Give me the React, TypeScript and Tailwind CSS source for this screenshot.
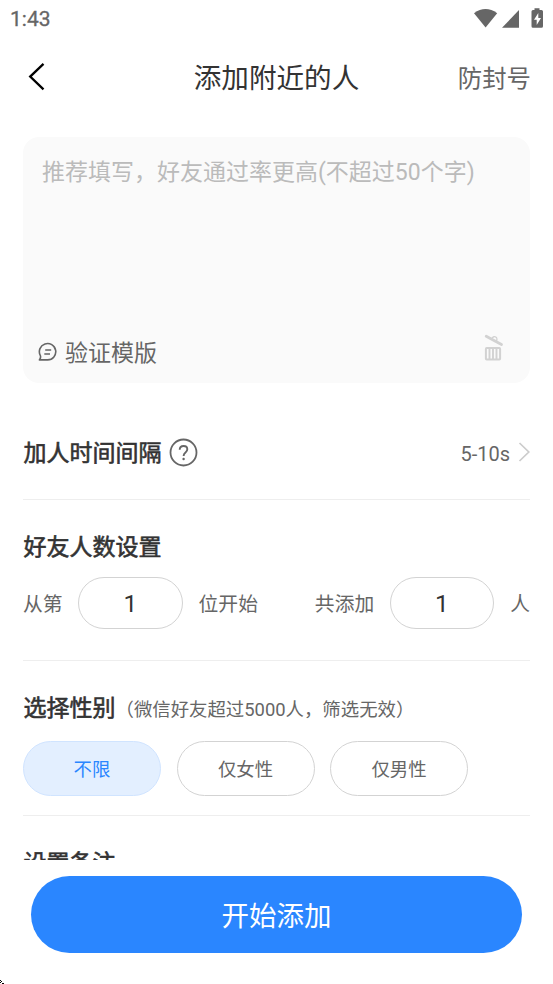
import React from "react";

const cjk = "font-[Roboto,'Noto_Sans_CJK_SC',sans-serif]";
const heading = "pl-[0.5px] text-[23px] leading-[34px] text-[#333] [-webkit-text-stroke:0.6px_#333]";

function StatusBar() {
  return (
    <div className="flex h-[38px] items-center justify-between pl-[10px] pr-[10px] text-[#666]">
      <span className="text-[21px] leading-[38px] [-webkit-text-stroke:0.3px_#666]">1:43</span>
      <svg width="70" height="38" viewBox="473 0 70 38" fill="#666">
        <path d="M474 13.2 Q485.500 4.800 497.200 13.200 L485.600 27.400 Z" />
        <path d="M502 27.800 L519 10 V27.800 Z" />
        <path
          fillRule="evenodd"
          d="M534.500 8.200 H539.500 V10 H541.500 Q543 10 543 11.500 V26.300 Q543 27.800 541.500 27.800 H533 Q531.500 27.800 531.500 26.300 V11.500 Q531.500 10 533 10 H534.500 Z M538.300 13 L534 19.800 H536.700 V25 L541 18 H538.300 Z"
        />
      </svg>
    </div>
  );
}

function TopBar() {
  return (
    <header className="grid h-[99px] grid-cols-[1fr_auto_1fr] items-start pl-[28px] pr-[22px] pt-[21px]">
      <svg className="mt-[3px]" width="18" height="30" viewBox="0 0 18 30" fill="none" stroke="#000" strokeWidth="2.300">
        <path d="M15.500 1.900 L2.200 14.600 L15.500 27.300" />
      </svg>
      <h1 className="-ml-[6px] text-[27.6px] leading-[40px] text-[#333]">添加附近的人</h1>
      <span className="justify-self-end text-[24.4px] leading-[40px] text-[#666]">防封号</span>
    </header>
  );
}

function MessageCard() {
  return (
    <section className="flex h-[246px] shrink-0 flex-col justify-between rounded-[16px] bg-[#fafafa] pb-[12px] pl-[19px] pr-[26px] pt-[19px]">
      <p className="whitespace-nowrap text-[23px] leading-[34px] text-[#bbb]">推荐填写，好友通过率更高(不超过50个字)</p>
      <div className="-ml-[4px] flex items-center">
        <svg className="-mt-[3px]" width="20" height="20" viewBox="0 0 20 20" fill="none" stroke="#666" strokeWidth="1.600">
          <path d="M1.400 17.900 H9.700 A8.200 8.200 0 1 0 2.300 13.500 Q3.200 15.500 1.400 17.900 Z" strokeLinejoin="round" />
          <path d="M7.200 8 H13.200 M6.300 12 H12" />
        </svg>
        <span className="ml-[7px] pt-[1px] text-[23px] leading-[35px] text-[#666]">验证模版</span>
        <svg className="-mt-[11px] ml-auto" width="20" height="28" viewBox="0 0 20 28" fill="none" stroke="#d2d2d2">
          <path d="M2.200 2.300 L17.500 10.500" strokeWidth="2.800" strokeLinecap="round" />
          <path d="M7.800 4.500 Q9.500 1.500 12.500 3.500 Q13.500 5 12.500 7" strokeWidth="1.300" />
          <rect x="1.900" y="14.100" width="14.200" height="11.500" rx="0.800" strokeWidth="2" />
          <path d="M5.500 14 V25 M9 14 V25 M12.500 14 V25" strokeWidth="1.900" />
        </svg>
      </div>
    </section>
  );
}

function NumberInput() {
  return (
    <div className="flex h-[52px] w-[104.500px] items-center justify-center rounded-full border border-[#d3d3d3] pt-[3px] text-[24.500px] text-[#333]">
      1
    </div>
  );
}

function GenderOption({ label, active = false }: { label: string; active?: boolean }) {
  return (
    <button
      className={`flex h-[55px] w-[138px] items-center justify-center rounded-full border pt-[2px] text-[18.4px] ${
        active ? "border-[#d0e4ff] bg-[#e3efff] text-[#2a86ff]" : "border-[#d3d3d3] bg-white text-[#666]"
      }`}
    >
      {label}
    </button>
  );
}

export default function App() {
  return (
    <div lang="zh-CN" className={`relative flex h-[984px] w-[553px] flex-col overflow-hidden bg-white ${cjk}`}>
      <StatusBar />
      <TopBar />
      <main className="flex h-[723px] flex-col overflow-hidden pl-[23px] pr-[23px]">
        <MessageCard />
        <section className="flex h-[117px] shrink-0 items-center border-b border-[#eee] pt-[22px]">
          <h2 className={`${heading} pt-[3px]`}>加人时间间隔</h2>
          <svg className="ml-[7px]" width="29" height="29" viewBox="0 0 29 29" fill="none" stroke="#666" strokeWidth="1.800">
            <circle cx="14.500" cy="14.500" r="13" />
            <path d="M10.700 11.800 Q10.700 8 14.600 8 Q18.300 8 18.300 11.300 Q18.300 13 16.500 14.400 Q14.600 15.900 14.600 17.900" strokeWidth="1.900" />
            <circle cx="14.600" cy="21" r="1.200" fill="#666" stroke="none" />
          </svg>
          <span className="ml-auto pt-[3px] text-[20px] text-[#666]">5-10s</span>
          <svg className="ml-[8px]" width="12" height="20" viewBox="0 0 12 20" fill="none" stroke="#ccc" strokeWidth="1.700">
            <path d="M1.500 1 L10.800 10 L1.500 19" />
          </svg>
        </section>
        <section className="h-[161px] shrink-0 border-b border-[#eee] pt-[31px]">
          <h2 className={heading}>好友人数设置</h2>
          <div className="mt-[12px] flex items-center text-[19.8px] text-[#666]">
            <span className="pt-[4px]">从第</span>
            <span className="ml-[15.500px] mr-[16px]"><NumberInput /></span>
            <span className="pt-[4px]">位开始</span>
            <span className="ml-auto pt-[4px]">共添加</span>
            <span className="ml-[15.500px] mr-[16px]"><NumberInput /></span>
            <span className="pt-[4px]">人</span>
          </div>
        </section>
        <section className="h-[155px] shrink-0 border-b border-[#eee] pt-[31px]">
          <div className="flex items-baseline">
            <h2 className={heading}>选择性别</h2>
            <span className="whitespace-nowrap text-[18.4px] text-[#666]">（微信好友超过5000人，筛选无效）</span>
          </div>
          <div className="mt-[15px] flex gap-[15.500px]">
            <GenderOption label="不限" active />
            <GenderOption label="仅女性" />
            <GenderOption label="仅男性" />
          </div>
        </section>
        <section className="shrink-0 pt-[31px]">
          <h2 className={heading}>设置备注</h2>
        </section>
      </main>
      <footer className="px-[31px] pt-[16px]">
        <button className="flex h-[77px] w-full items-center justify-center rounded-full bg-[#2a86ff] pt-[4px] text-[27.5px] text-white">
          开始添加
        </button>
      </footer>
      <svg className="absolute bottom-0 left-0" width="5" height="5" viewBox="0 0 5 5" fill="#000">
        <path d="M0 1h1v1H0z M1 2h1v1H1z M2 4h1v1H2z M3 4h1v1H3z M0 3h1v1H0z" />
      </svg>
    </div>
  );
}
